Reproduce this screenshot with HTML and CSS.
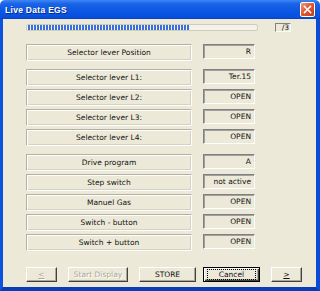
FILE: index.html
```html
<!DOCTYPE html>
<html lang="en">
<head>
    <meta charset="UTF-8">
    <title>Live Data EGS</title>
    <link rel="stylesheet" href="styles.css">
</head>
<body>
    <div class="window">
        <div class="titlebar">
            <span class="title">Live Data EGS</span>
            <span class="close">
                <svg width="9" height="9" viewBox="0 0 9 9"><path d="M1.5 1.5 L7.5 7.5 M7.5 1.5 L1.5 7.5" stroke="#fff" stroke-width="1.6" stroke-linecap="square"/></svg>
            </span>
        </div>
        <div class="frame">
            <div class="progress-row">
                <div class="progress"><div class="progress-fill"></div></div>
                <div class="page">/3</div>
            </div>

            <div class="group first">
                <div class="row"><div class="label">Selector lever Position</div><div class="value">R</div></div>
            </div>

            <div class="group">
                <div class="row"><div class="label">Selector lever L1:</div><div class="value">Ter.15</div></div>
                <div class="row"><div class="label">Selector lever L2:</div><div class="value">OPEN</div></div>
                <div class="row"><div class="label">Selector lever L3:</div><div class="value">OPEN</div></div>
                <div class="row"><div class="label">Selector lever L4:</div><div class="value">OPEN</div></div>
            </div>

            <div class="group">
                <div class="row"><div class="label">Drive program</div><div class="value">A</div></div>
                <div class="row"><div class="label">Step switch</div><div class="value">not active</div></div>
                <div class="row"><div class="label">Manuel Gas</div><div class="value">OPEN</div></div>
                <div class="row"><div class="label">Switch - button</div><div class="value">OPEN</div></div>
                <div class="row"><div class="label">Switch + button</div><div class="value">OPEN</div></div>
            </div>

            <div class="buttons">
                <button class="btn small" disabled><u>&lt;</u></button>
                <button class="btn wide" disabled>Start Display</button>
                <button class="btn mid">STORE</button>
                <button class="btn mid default"><span class="focus">Cancel</span></button>
                <button class="btn small"><u>&gt;</u></button>
            </div>
        </div>
    </div>
</body>
</html>
```

FILE: styles.css
```css
body {
    margin: 0;
    font-family: "DejaVu Sans", sans-serif;
    font-size: 7.5px;
    color: #111;
}

.window {
    width: 320px;
    height: 291px;
    display: flex;
    flex-direction: column;
}

/* XP title bar */
.titlebar {
    height: 19px;
    flex-shrink: 0;
    display: flex;
    align-items: center;
    justify-content: space-between;
    padding: 0 5px 0 5px;
    background: linear-gradient(to bottom, #3d87f5 0%, #1b63e6 20%, #0a57e4 60%, #0650dc 90%, #0640c8 100%);
    border-radius: 5px 5px 0 0;
    box-sizing: border-box;
}
.title {
    color: #fff;
    font-family: "Liberation Sans", Arial, sans-serif;
    font-size: 8.5px;
    font-weight: bold;
    letter-spacing: 0.3px;
    text-shadow: 1px 1px 0 #0a2a8a;
}
.close {
    width: 13px;
    height: 13px;
    display: flex;
    align-items: center;
    justify-content: center;
    background: linear-gradient(135deg, #f0a080 0%, #e2582f 45%, #c2401c 100%);
    border: 1px solid #fff;
    border-radius: 2px;
}

.frame {
    flex: 1;
    background: #ece9d8;
    border-left: 3px solid #0a52e0;
    border-right: 4px solid #0a4cd8;
    border-bottom: 4px solid #0a3cb8;
    padding-left: 23px;
}

.progress-row {
    display: flex;
    align-items: flex-start;
    margin-top: 4px;
    height: 9px;
}
.progress {
    width: 228px;
    height: 5px;
    margin-top: 1px;
    border: 1px solid #d0ccbc;
    border-radius: 2px;
    background: #f4f2ea;
    padding: 0 1px;
}
.progress-fill {
    width: 161px;
    height: 100%;
    background: repeating-linear-gradient(to right, #3a6fe0 0, #3a6fe0 2px, transparent 2px, transparent 3px);
}
.page {
    width: 13px;
    height: 7px;
    margin-left: 17px;
    line-height: 8px;
    text-align: right;
    padding-right: 1px;
    border: 1px solid;
    border-color: #808080 #fff #fff #808080;
}

.group {
    display: flex;
    flex-direction: column;
    gap: 3px;
    margin-top: 8px;
}
.group.first {
    margin-top: 12px;
}

.row {
    display: flex;
    height: 17px;
}
.label {
    width: 164px;
    height: 15px;
    line-height: 15px;
    text-align: center;
    border: 1px solid;
    border-color: #b4b0a2 #fff #fff #b4b0a2;
    box-shadow: inset 1px 1px #fff, inset -1px -1px #d6d2c2;
}
.value {
    width: 47px;
    height: 13px;
    margin-left: 11px;
    line-height: 14px;
    text-align: right;
    padding-right: 3px;
    border: 1px solid;
    border-color: #808080 #fff #fff #808080;
    box-shadow: inset 1px 1px #a0a0a0;
}

.buttons {
    display: flex;
    margin-top: 16px;
}
.btn {
    height: 15px;
    padding: 0;
    font-family: inherit;
    font-size: 7.5px;
    color: #111;
    background: #ece9d8;
    border: 1px solid;
    border-color: #fff #404040 #404040 #fff;
    box-shadow: inset -1px -1px #aca899;
}
.btn:disabled {
    color: #aca899;
    text-shadow: 1px 1px 0 #fff;
}
.btn u {
    text-decoration: underline;
}
.btn.small {
    width: 31px;
}
.btn.wide {
    width: 60px;
    margin-left: 11px;
}
.btn.mid {
    width: 57px;
    margin-left: 11px;
}
.btn.default {
    margin-left: 7px;
    border: 1px solid #000;
    box-shadow: inset 1px 1px #fff, inset -1px -1px #404040, inset -2px -2px #aca899;
}
.btn.default + .btn {
    margin-left: 11px;
}
.focus {
    display: inline-block;
    width: 47px;
    height: 9px;
    line-height: 9px;
    border: 1px dotted #000;
}
```
